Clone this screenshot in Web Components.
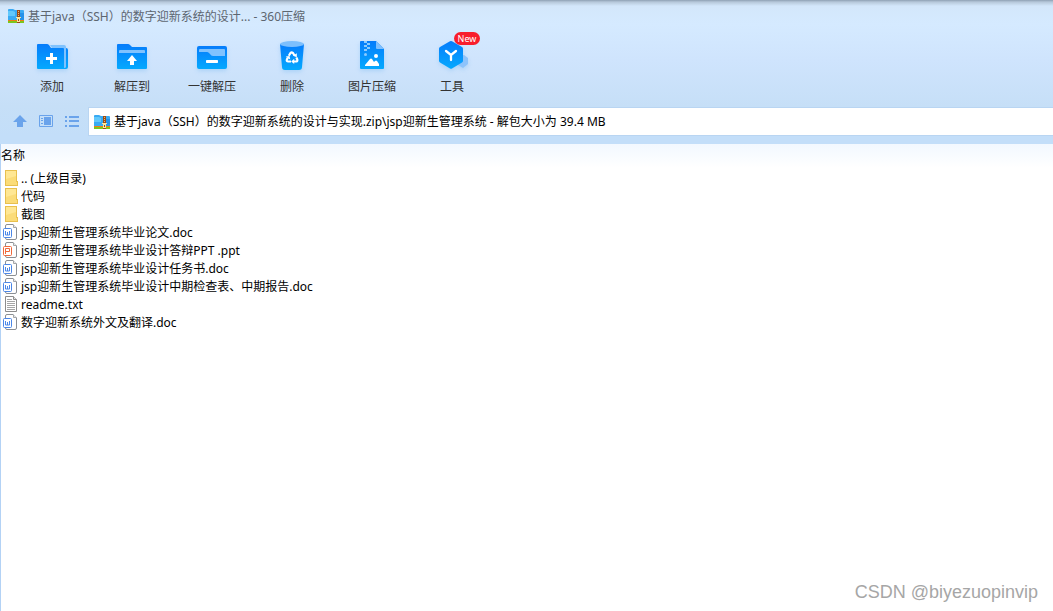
<!DOCTYPE html>
<html lang="zh-CN">
<head>
<meta charset="utf-8">
<title>360压缩</title>
<style>
html, body { margin: 0; }
body { font: 12px/18px "Noto Sans", "Noto Sans CJK SC", sans-serif; color: #000; }
</style>
</head>
<body>
<archive-window>
  <title-bar slot="head">基于java（SSH）的数字迎新系统的设计... - 360压缩</title-bar>
  <tool-bar slot="head">
    <tool-button icon="add">添加</tool-button>
    <tool-button icon="extract">解压到</tool-button>
    <tool-button icon="quick">一键解压</tool-button>
    <tool-button icon="trash">删除</tool-button>
    <tool-button icon="image">图片压缩</tool-button>
    <tool-button icon="tools" badge="New">工具</tool-button>
  </tool-bar>
  <address-bar slot="head" value="基于java（SSH）的数字迎新系统的设计与实现.zip\jsp迎新生管理系统 - 解包大小为 39.4 MB"></address-bar>
  <file-list></file-list>
  <water-mark slot="mark">CSDN @biyezuopinvip</water-mark>
</archive-window>

<script>
const BLUE = '<defs><linearGradient id="g" x1="0" y1="0" x2="0" y2="1"><stop offset="0" stop-color="#067cfb"/><stop offset="1" stop-color="#05a9fe"/></linearGradient></defs>';

const ICONS = {
  add: [32, 32, BLUE +
    '<path fill="url(#g)" d="M2 4h9q1 0 2 1l2 3h15q2 0 2 2v17q0 2-2 2H2q-1 0-1-1V5q0-1 1-1z"/>' +
    '<path fill="#7fc2fe" d="M14 5h14q2 0 2 2v20q0 1-2 1V9q0-1-1-1H16z"/>' +
    '<path fill="#fff" d="M14 13h3v4h4v3h-4v4h-3v-4h-4v-3h4z"/>'],
  extract: [32, 32, BLUE +
    '<path fill="url(#g)" d="M2 4h10q1 0 2 1l2 2h14q1 0 1 1v20q0 1-1 1H2q-1 0-1-1V5q0-1 1-1z"/>' +
    '<path fill="#80c2fe" d="M4 10h24q1 0 1 1v2H3v-2q0-1 1-1z"/>' +
    '<path fill="#fff" d="M16 15l5 6h-3v4h-4v-4h-3z"/>'],
  quick: [32, 32, BLUE +
    '<rect x="1" y="6" width="30" height="23" rx="2" fill="url(#g)"/>' +
    '<path fill="#80c2fe" d="M4 9h24q1 0 1 1v6H17q-2 0-3-2l-1-1q-1-1-2-1H3v-2q0-1 1-1z"/>' +
    '<rect x="10" y="20" width="12" height="3" rx=".7" fill="#fff"/>'],
  trash: [32, 32, BLUE +
    '<path fill="url(#g)" d="M4 4h24l-2 23q0 3-3 3H9q-3 0-3-3z"/>' +
    '<ellipse cx="16" cy="4" rx="12" ry="3" fill="#7dbffd"/>' +
    '<g fill="none" stroke="#fff" stroke-width="2.200"><path d="M12.800 15.800l1.700-2.800q1-1 2.500 0l1.500 2.500"/><path d="M20.300 17.500l1 2q.5 2-1.500 2h-2"/><path d="M15 21.500h-2.800q-2 0-1.300-2l1-2"/></g>' +
    '<path fill="#fff" d="M20.800 13.300v4l-3.800-1.600zM18.200 18.800v5.200l-3-2.600zM9.700 16.500l3.800-.5.8 3.600z"/>'],
  image: [32, 32, BLUE +
    '<path fill="url(#g)" d="M5 1h15l8 8v19q0 1-1 1H5q-1 0-1-1V2q0-1 1-1z"/>' +
    '<path fill="#80c0fe" d="M20 1l8 8h-7q-1 0-1-1z"/>' +
    '<path fill="#8bcafe" d="M8 1h3v2H8zM11 3h3v2h-3zM8 5h3v2H8zM11 7h3v2h-3zM8 9h3v2H8z"/><circle cx="9.500" cy="14.500" r="1.500" fill="#8bcafe"/>' +
    '<path fill="#fff" d="M9 26v-1l5-6q1-1 2 0l2 3 1-1q1-1 2 0l2 3v2z"/><circle cx="20" cy="16" r="2" fill="#fff"/>'],
  tools: [32, 32, BLUE +
    '<path fill="#8dc3fb" d="M24 16l4-1 4 3v6l-5 4-5-3z"/>' +
    '<path fill="url(#g)" d="M14 1.300q1-.6 2 0l10 5.800q1 .6 1 1.700v12q0 1.100-1 1.700l-10 6q-1 .6-2 0l-10-6q-1-.6-1-1.700v-12q0-1.100 1-1.700z"/>' +
    '<path fill="none" stroke="#fff" stroke-width="2.300" stroke-linecap="round" d="M10 11l5 4 5-4M15 15v5"/>'],
  archive: [16, 16,
    '<path fill="#39aaf3" d="M0 2q0-1 1-1h4l2 1h8q1 0 1 1v9H0z"/><path fill="#61c8fb" d="M0 3h5l2 1v4H0z"/><path fill="#2492ea" d="M12 5h4v7h-4z"/>' +
    '<path fill="#ed7d18" d="M0 12h16v1H0z"/><path fill="#7cc61d" d="M0 13h16v2H0z"/>' +
    '<path fill="#9b4b13" d="M9 2h3v13H9z"/><path fill="#e8b878" d="M10 3h1v1h-1zM10 5h1v1h-1zM10 7h1v1h-1z"/>' +
    '<path fill="#ffe49b" d="M8 9h5v1H8zM9 10h3v4H9z"/><path fill="#80501d" d="M10 11h1v2h-1z"/>'],
  up: [14, 14, '<path fill="#6aa3eb" d="M7 0l7 7h-4v5H4V7H0z"/>'],
  panel: [14, 14, '<path fill="none" stroke="#6aa3eb" d="M.5.500h13v11H.5z"/><path fill="#6aa3eb" d="M2 3h2v1H2zM2 5h2v1H2zM2 8h2v1H2zM5 2h7v8H5z"/>'],
  lines: [14, 14, '<path fill="#6aa3eb" d="M0 1h2v2H0zM0 5h2v2H0zM0 10h2v2H0zM4 1h10v2H4zM4 5h10v2H4zM4 10h10v2H4z"/>'],
  folder: [16, 18,
    '<path fill="#e8c04e" d="M2 1h12v11h1v5H2z"/><path fill="#ffe793" d="M3 2h10v14H3z"/><path fill="#fbdc78" d="M13 13h1v3h-1zM3 10l10-3v9H3z"/>'],
  word: [16, 18, page() + badge('#4b87e8', 'M2.500 8v4h4V8M4.500 9v3')],
  slides: [16, 18, page() + badge('#f0693c', 'M2.500 13V7.500h4v3h-4')],
  text: [16, 18,
    '<path fill="#fff" stroke="#8d8d8d" d="M2.500 1.500h8l3 3v12h-11z"/><path fill="#e3e3e3" stroke="#8d8d8d" d="M10.500 1.500v3h3"/>' +
    '<path stroke="#a5a5a5" d="M4 4.500h5M4 6.500h8M4 8.500h8M4 10.500h8M4 12.500h8M4 14.500h8"/>']
};
function page() {
  return '<path fill="#fff" stroke="#8b8f94" d="M2.500 5V3q0-1.500 1.500-1.500h6l3.500 3.500V15q0 1.500-1.500 1.500H4q-1.500 0-1.500-1.500z"/><path fill="#e6e6e6" stroke="#a3a6aa" d="M10.500 1.500v3h3"/>';
}
function badge(color, glyph) {
  return `<rect x="0" y="5" width="9" height="10" rx="1" fill="#fff"/><rect x=".5" y="5.500" width="8" height="9" rx="1" fill="#fff" stroke="${color}"/><path fill="none" stroke="${color}" d="${glyph}"/>`;
}

function define(name, html, setup) {
  customElements.define(name, class extends HTMLElement {
    connectedCallback() {
      if (this.shadowRoot) return;
      const template = document.createElement('template');
      template.innerHTML = html;
      this.attachShadow({ mode: 'open' }).append(template.content.cloneNode(true));
      if (setup) setup(this, this.shadowRoot);
    }
  });
}

define('app-icon', '<style>:host{display:block;flex:none}svg{display:block}</style><svg aria-hidden="true"></svg>', (host, root) => {
  const [w, h, art] = ICONS[host.getAttribute('name')];
  const svg = root.querySelector('svg');
  svg.setAttribute('width', w);
  svg.setAttribute('height', h);
  svg.setAttribute('viewBox', `0 0 ${w} ${h}`);
  svg.innerHTML = art;
});

define('archive-window', `<style>
  :host{display:flex;flex-direction:column;min-height:100vh;position:relative;background:#fff}
  header{background:linear-gradient(#8ea1b4 0,#b6c8da 2px,#d3e7fb 6px,#d5eaff 24px,#cfe4fd 60px,#c6dff7 106px,#c3def9 136px);padding-bottom:8px}
  main{flex:1;border-left:1px solid #b3d2f5;background:linear-gradient(#f2f8ff,#fff 24px)}
  </style><header><slot name="head"></slot></header><main><slot></slot></main><slot name="mark"></slot>`);

define('title-bar', `<style>
  :host{display:flex;align-items:center;gap:4px;height:32px;padding-left:8px;color:#5d6670}
  h1{margin:0;padding-top:2px;font:inherit;white-space:nowrap}
  </style><app-icon name="archive"></app-icon><h1><slot></slot></h1>`);

define('tool-bar', '<style>:host{display:flex;height:75px;padding-left:12px}</style><slot></slot>');

define('tool-button', `<style>
  :host{display:block;width:80px}
  button{position:relative;display:flex;flex-direction:column;align-items:center;gap:6px;width:100%;padding:8px 0 0;border:0;background:none;font:inherit;color:#333;white-space:nowrap}
  app-icon{filter:drop-shadow(0 2px 2px #6db4f055)}
  .badge{position:absolute;left:42px;top:0;width:26px;height:13px;border-radius:7px;background:#f81d2c;color:#fff;font-size:9px;line-height:13px;text-align:center}
  .badge:empty{display:none}
  </style><button type="button"><span><slot></slot></span><span class="badge"></span></button>`, (host, root) => {
  const icon = document.createElement('app-icon');
  icon.setAttribute('name', host.getAttribute('icon'));
  root.querySelector('button').prepend(icon);
  root.querySelector('.badge').textContent = host.getAttribute('badge') || '';
});

define('address-bar', `<style>
  :host{display:flex;align-items:center;height:29px}
  nav{display:flex;gap:12px;padding:0 9px 0 13px}
  button{display:block;padding:0;border:0;background:none}
  label{flex:1;min-width:0;display:flex;align-items:center;gap:4px;box-sizing:border-box;height:29px;padding-left:5px;background:#fff;border:solid #b9d5f2;border-width:1px 0 1px 1px}
  input{flex:1;min-width:0;padding:0;border:0;outline:0;background:none;font:inherit;color:#000}
  </style><nav>
  <button type="button" aria-label="向上"><app-icon name="up"></app-icon></button>
  <button type="button" aria-label="预览"><app-icon name="panel"></app-icon></button>
  <button type="button" aria-label="列表"><app-icon name="lines"></app-icon></button>
  </nav><label><app-icon name="archive"></app-icon><input type="text" aria-label="路径"></label>`, (host, root) => {
  root.querySelector('input').value = host.getAttribute('value');
});

const FILES = [
  ['folder', '.. (上级目录)'],
  ['folder', '代码'],
  ['folder', '截图'],
  ['word', 'jsp迎新生管理系统毕业论文.doc'],
  ['slides', 'jsp迎新生管理系统毕业设计答辩PPT .ppt'],
  ['word', 'jsp迎新生管理系统毕业设计任务书.doc'],
  ['word', 'jsp迎新生管理系统毕业设计中期检查表、中期报告.doc'],
  ['text', 'readme.txt'],
  ['word', '数字迎新系统外文及翻译.doc']
];
define('file-list', `<style>
  :host{display:block}
  table{width:100%;border-collapse:collapse}
  th{height:25px;padding:0 0 2px;box-sizing:border-box;font-weight:normal;text-align:left}
  td{padding:0}
  .name{display:flex;align-items:center;gap:2px;height:18px;padding-left:2px;white-space:nowrap}
  .name span{padding-top:2px}
  </style><table><thead><tr><th scope="col">名称</th></tr></thead><tbody>${
  FILES.map(([icon, name]) => `<tr><td><div class="name"><app-icon name="${icon}"></app-icon><span>${name}</span></div></td></tr>`).join('')
  }</tbody></table>`);

define('water-mark', `<style>
  :host{position:absolute;right:15px;bottom:7px;font:18px/24px "Liberation Sans",sans-serif;color:#a6a6a6}
  </style><slot></slot>`);
</script>
</body>
</html>
